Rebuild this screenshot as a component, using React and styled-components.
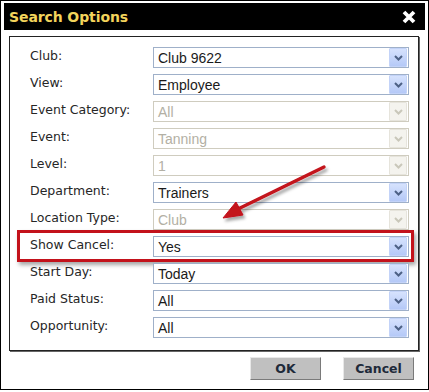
import styled, {createGlobalStyle} from "styled-components";

const GlobalStyle = createGlobalStyle`
  body {
    margin: 0;
    background: #ffffff;
    font-family: "DejaVu Sans", sans-serif;
  }
`;

const Dialog = styled.div`
  position: relative;
  width: 421px;
  height: 384px;
  border: 1px solid #000;
  padding: 2px 3px;
  background: #fff;
  display: flex;
  flex-direction: column;
`;

const TitleBar = styled.div`
  height: 27px;
  background: #000;
  display: flex;
  align-items: center;
  justify-content: space-between;
  padding: 0 9px 0 5px;
`;

const Title = styled.h1`
  margin: 0;
  font-family: "DejaVu Sans", sans-serif;
  font-size: 14px;
  font-weight: bold;
  color: #f3d45c;
  letter-spacing: -0.1px;
`;

const CloseIcon = styled.svg`
  width: 14px;
  height: 14px;
  display: block;
`;

const Panel = styled.div`
  margin: 6px 6px 0 5px;
  border: 1px solid #222;
  box-shadow: 1px 1px 0 #666;
  padding: 10px 9px 12px 20px;
  display: grid;
  row-gap: 6px;
`;

const Row = styled.div`
  position: relative;
  display: flex;
  align-items: center;
  height: 21px;
`;

const Label = styled.span`
  width: 123px;
  flex: none;
  font-size: 12.5px;
  color: #262626;
  margin-top: -4px;
`;

const Select = styled.div`
  flex: 1;
  height: 19px;
  border: 1px solid ${({$disabled}) => ($disabled ? "#cfccbf" : "#9fb0c9")};
  display: flex;
  align-items: center;
  justify-content: space-between;
  background: #fff;
  padding: 0 1px 0 4px;
`;

const Value = styled.span`
  font-family: "Liberation Sans", Arial, sans-serif;
  font-size: 14px;
  color: ${({$disabled}) => ($disabled ? "#b3b0a4" : "#1a1a1a")};
`;

const ArrowButton = styled.span`
  width: 16px;
  height: 17px;
  display: flex;
  align-items: center;
  justify-content: center;
  border-radius: 1px;
  background: ${({$disabled}) =>
    $disabled ? "#f4f3ee" : "linear-gradient(180deg, #d6e2fd 0%, #b5c9f7 100%)"};
  border: 1px solid ${({$disabled}) => ($disabled ? "#e6e4dc" : "#c3d3f8")};
`;

const Highlight = styled.div`
  position: absolute;
  top: -6px;
  bottom: -5px;
  left: -13px;
  right: -5px;
  border: 3px solid #c3121b;
  box-shadow: 2px 3px 4px rgba(0, 0, 0, 0.35);
  pointer-events: none;
`;

const Footer = styled.div`
  display: flex;
  justify-content: flex-end;
  gap: 22px;
  padding: 6px 11px 0 0;
`;

const Button = styled.button`
  width: 71px;
  height: 23px;
  background: #c0c0c0;
  border: 1px solid;
  border-color: #e8e8e8 #7a7a7a #7a7a7a #e8e8e8;
  font-family: "DejaVu Sans", sans-serif;
  font-weight: bold;
  font-size: 12.5px;
  color: #1e2a3a;
  padding: 0;
`;

const Overlay = styled.svg`
  position: absolute;
  left: -1px;
  top: -1px;
  pointer-events: none;
`;

const Chevron = ({disabled}) => (
  <svg width="9" height="6" viewBox="0 0 9 6">
    <path
      d="M1 1 L4.5 4.5 L8 1"
      fill="none"
      stroke={disabled ? "#c9c7ba" : "#4d6185"}
      strokeWidth="2"
    />
  </svg>
);

const fields = [
  {label: "Club:", value: "Club 9622"},
  {label: "View:", value: "Employee"},
  {label: "Event Category:", value: "All", disabled: true},
  {label: "Event:", value: "Tanning", disabled: true},
  {label: "Level:", value: "1", disabled: true},
  {label: "Department:", value: "Trainers"},
  {label: "Location Type:", value: "Club", disabled: true},
  {label: "Show Cancel:", value: "Yes", highlight: true},
  {label: "Start Day:", value: "Today"},
  {label: "Paid Status:", value: "All"},
  {label: "Opportunity:", value: "All"},
];

export default function App() {
  return (
    <>
      <GlobalStyle />
      <Dialog>
        <TitleBar>
          <Title>Search Options</Title>
          <CloseIcon viewBox="0 0 14 14">
            <path d="M2 2 L12 12 M12 2 L2 12" stroke="#fff" strokeWidth="3.8" strokeLinecap="butt" />
          </CloseIcon>
        </TitleBar>
        <Panel>
          {fields.map(({label, value, disabled, highlight}) => (
            <Row key={label}>
              <Label>{label}</Label>
              <Select $disabled={disabled}>
                <Value $disabled={disabled}>{value}</Value>
                <ArrowButton $disabled={disabled}>
                  <Chevron disabled={disabled} />
                </ArrowButton>
              </Select>
              {highlight && <Highlight />}
            </Row>
          ))}
        </Panel>
        <Footer>
          <Button>OK</Button>
          <Button>Cancel</Button>
        </Footer>
        <Overlay width="429" height="392" viewBox="0 0 429 392">
          <defs>
            <filter id="shadow" x="-20%" y="-20%" width="140%" height="140%">
              <feDropShadow dx="2" dy="3" stdDeviation="1.6" floodColor="#000" floodOpacity="0.35" />
            </filter>
          </defs>
          <g filter="url(#shadow)" fill="#c3121b" stroke="#c3121b">
            <line x1="324" y1="167" x2="236" y2="210" strokeWidth="3.4" strokeLinecap="round" />
            <polygon points="223,218 236,202 243,215" strokeWidth="1" strokeLinejoin="round" />
          </g>
        </Overlay>
      </Dialog>
    </>
  );
}
